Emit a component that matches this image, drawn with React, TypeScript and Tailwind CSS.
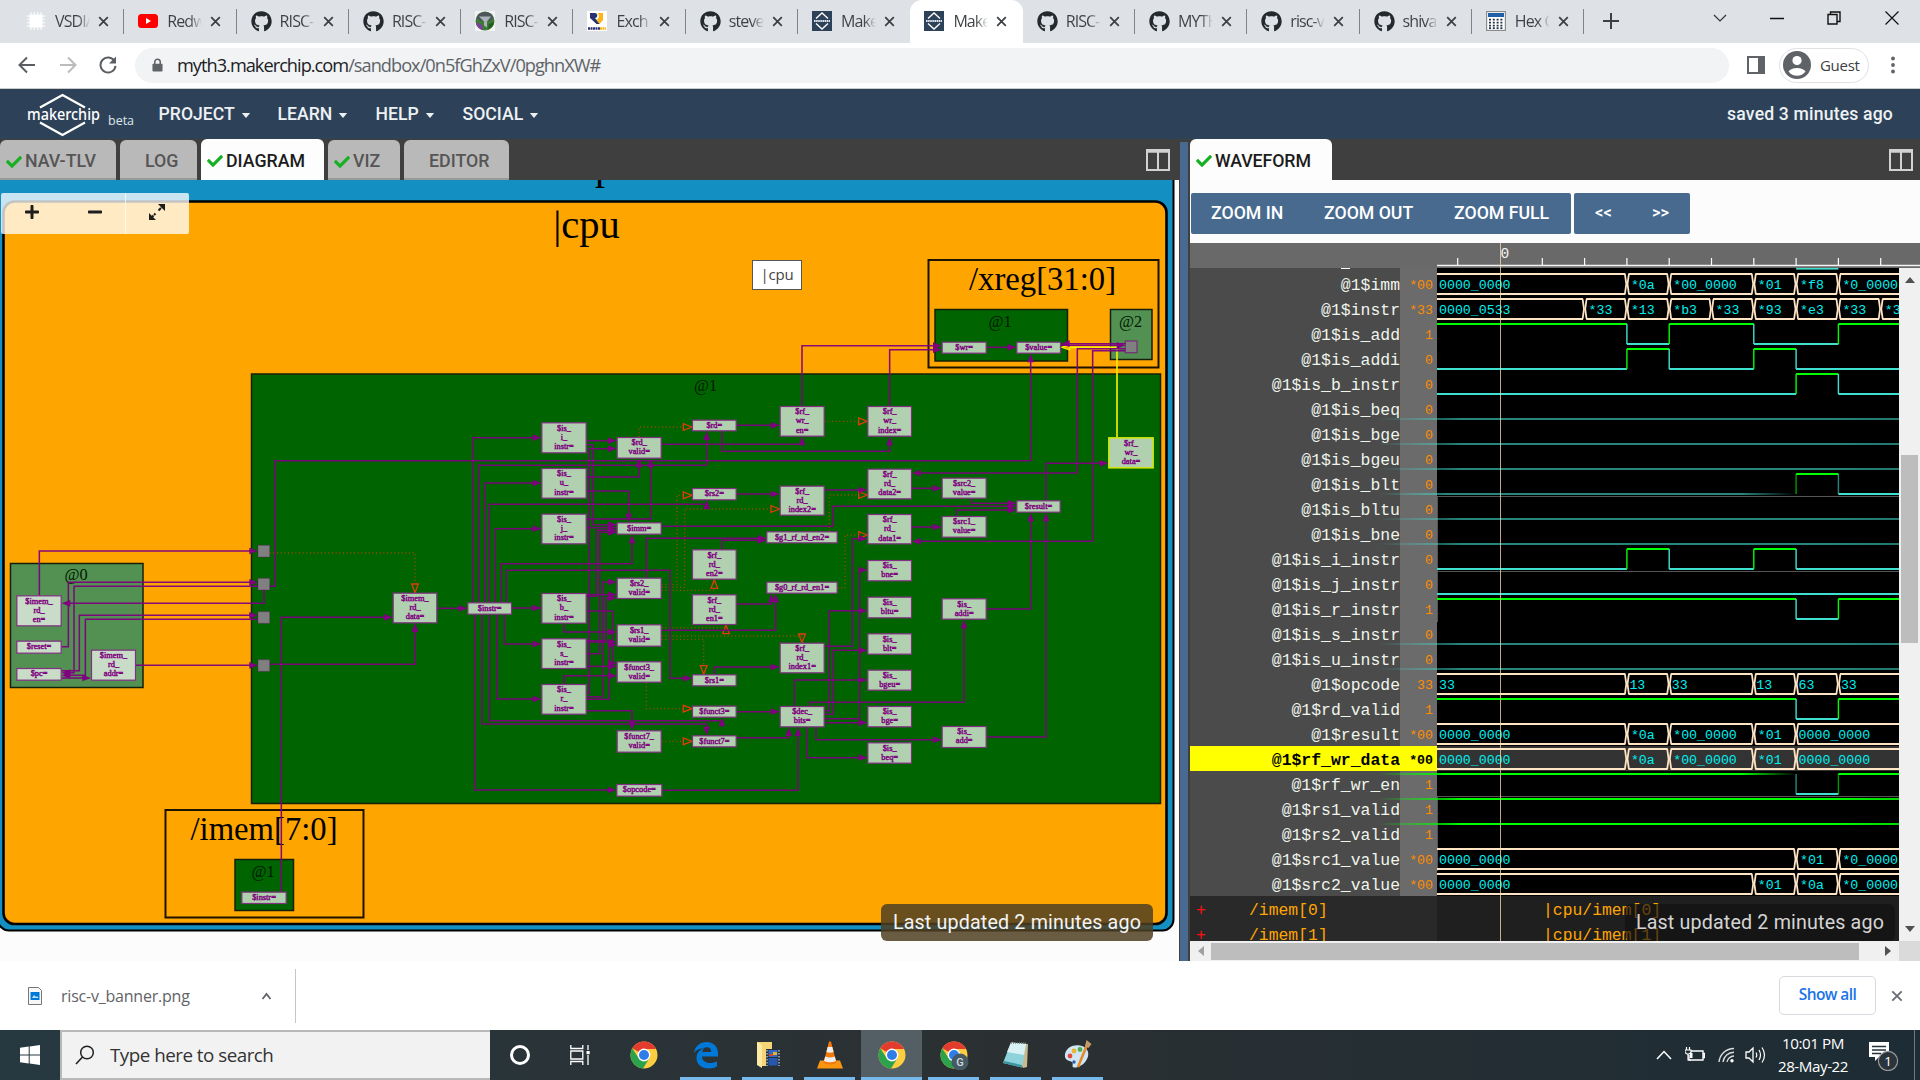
import React from "react";
import { FaGithub, FaCheck, FaPlus, FaMinus } from "react-icons/fa";

const ui = "font-['Open_Sans','Noto_Sans',sans-serif]";
const rob = "font-[Roboto,sans-serif]";

/* ---------- Browser chrome ---------- */

function Logo({ className = "" }: { className?: string }) {
  return (
    <svg viewBox="0 0 20 20" className={className}>
      <rect width="20" height="20" fill="#2d4259" />
      <path d="M4 7.5 10 2l6 5.5M4 12.5l6 5.5 6-5.5" fill="none" stroke="#fff" strokeWidth="1.3" />
      <path d="M2 10h16" stroke="#dde6ee" strokeWidth="2" strokeDasharray="1.6 .5" />
    </svg>
  );
}

function Favicon({ kind }: { kind: string }) {
  if (kind === "gh") return <FaGithub className="size-[21px] text-[#24292e]" />;
  if (kind === "mk") return <Logo className="size-5" />;
  if (kind === "yt")
    return (
      <svg viewBox="0 0 20 20" className="size-5">
        <rect y="3" width="20" height="14" rx="3.5" fill="#f00" />
        <path d="M8 7v6l5-3z" fill="#fff" />
      </svg>
    );
  if (kind === "chip")
    return (
      <svg viewBox="0 0 20 20" className="size-5">
        <path d="M5 1v18M8.3 1v18M11.7 1v18M15 1v18M1 5h18M1 8.3h18M1 11.7h18M1 15h18" stroke="#f6f7f8" strokeWidth="1.3" />
        <rect x="3.5" y="3.5" width="13" height="13" fill="#fff" />
      </svg>
    );
  if (kind === "globe")
    return (
      <svg viewBox="0 0 20 20" className="size-5">
        <rect width="20" height="20" fill="#f3f3f3" />
        <circle cx="10" cy="10" r="9.5" fill="#3d7a35" />
        <path d="M1.500 7a9 9 0 0 1 17 0l-4 3h-9z" fill="#4d565c" />
        <path d="M4 5.500h12l-4 5v6l-3-2v-4z" fill="#a9b4b8" />
        <path d="M1 11l6 3 1 5a9 9 0 0 1-7-8z" fill="#7c3f9a" />
        <path d="M19 11l-5 2-1 5a9 9 0 0 0 6-7z" fill="#205c1f" />
      </svg>
    );
  if (kind === "riscv")
    return (
      <svg viewBox="0 0 20 20" className="size-5">
        <rect width="20" height="20" fill="#fff" />
        <path d="M3 2h5c3 0 3 5 0 5l5 6H9.500L3 7z" fill="#283272" />
        <path d="M10.500 2H16v7l-3.500 4-3-4c3-2 3-5 1-7z" fill="#fdb515" />
        <path d="M1 17.500h12" stroke="#283272" strokeWidth="2.4" strokeDasharray="2 .5" />
        <path d="M13 17.500h6" stroke="#fdb515" strokeWidth="2.4" strokeDasharray="2 .5" />
      </svg>
    );
  return (
    <svg viewBox="0 0 20 20" className="size-5">
      <rect x=".6" y=".6" width="18.8" height="18.8" fill="#fff" stroke="#8a8a8a" strokeWidth="1.2" />
      <rect x="2" y="2" width="16" height="4" fill="#1f5fa8" />
      {[8, 11, 14, 16.6].map((y) => (
        <path key={y} d={`M3 ${y + 0.6}h14`} stroke="#26344a" strokeWidth="1.8" strokeDasharray="2 1.8" />
      ))}
    </svg>
  );
}

function Cross({ className = "" }: { className?: string }) {
  return (
    <svg viewBox="0 0 12 12" className={className}>
      <path d="M1.3 1.3l9.4 9.4M10.7 1.3l-9.4 9.4" stroke="currentColor" strokeWidth="1.9" />
    </svg>
  );
}

const tabs: [string, string][] = [
  ["chip", "VSDIA"], ["yt", "Redw"], ["gh", "RISC-"], ["gh", "RISC-"], ["globe", "RISC-"], ["riscv", "Exch"],
  ["gh", "steve"], ["mk", "Make"], ["mk", "Make"], ["gh", "RISC-"], ["gh", "MYTH"], ["gh", "risc-v"], ["gh", "shiva"], ["calc", "Hex C"],
];

function TabStrip() {
  return (
    <div className="flex h-[43px] bg-[#dee1e6] pl-[12px] text-[#3c4043]">
      {tabs.map(([kind, label], i) => {
        const active = i === 8;
        return (
          <div
            key={i}
            className={
              "flex w-[112.3px] shrink-0 items-center pl-[14px] pb-[1px] " +
              (active ? "rounded-t-xl bg-white" : "")
            }
          >
            <span className="flex w-[21px] shrink-0">
              <Favicon kind={kind} />
            </span>
            <span
              className={
                "ml-[8px] w-[35px] shrink-0 overflow-hidden whitespace-nowrap bg-gradient-to-r from-[#3c4043] from-65% to-transparent bg-clip-text text-[16px] leading-6 tracking-[-0.9px] text-transparent " +
                ui
              }
            >
              {label}
            </span>
            <Cross className="ml-[8px] size-[11px] shrink-0 text-[#3c4043]" />
            {!active && i !== 7 && <span className="ml-auto h-[25px] w-px bg-[#7f8489]" />}
          </div>
        );
      })}
      <svg viewBox="0 0 16 16" className="ml-[19px] mt-[13px] size-4">
        <path d="M8 0v16M0 8h16" stroke="#3c4043" strokeWidth="2" />
      </svg>
      <svg viewBox="0 0 14 8" className="ml-[94px] mt-[14px] h-2 w-[14px]">
        <path d="M1 1l6 6 6-6" fill="none" stroke="#333" strokeWidth="1.2" />
      </svg>
      <svg viewBox="0 0 14 14" className="ml-[43px] mt-[11px] size-[14px]">
        <path d="M0 7.5h14" stroke="#111" strokeWidth="1.5" />
      </svg>
      <svg viewBox="0 0 14 14" className="ml-[43px] mt-[11px] size-[14px]">
        <path d="M1 3.5h9V13H1zM3.5 3.5V1H13v9.5h-3" fill="none" stroke="#111" strokeWidth="1.4" />
      </svg>
      <svg viewBox="0 0 14 14" className="ml-[44px] mt-[11px] size-[14px]">
        <path d="M.5.5l13 13M13.500.5l-13 13" stroke="#111" strokeWidth="1.2" />
      </svg>
    </div>
  );
}

function AddressBar() {
  return (
    <div className="flex h-[46px] items-center border-b border-[#c9cbcd] bg-white pb-px">
      <svg viewBox="0 0 18 18" className="ml-[18px] size-[18px]">
        <path d="M17 9H2M9 1.500 1.500 9 9 16.500" fill="none" stroke="#5a5e62" strokeWidth="2" />
      </svg>
      <svg viewBox="0 0 18 18" className="ml-[23px] size-[18px]">
        <path d="M1 9h15M9 1.500 16.500 9 9 16.500" fill="none" stroke="#b9bbbd" strokeWidth="2" />
      </svg>
      <svg viewBox="0 0 18 18" className="ml-[22px] size-[18px]">
        <path d="M15.500 5.200A7.500 7.500 0 1 0 16.500 9.800" fill="none" stroke="#5a5e62" strokeWidth="2" />
        <path d="M17 .5v7h-7z" fill="#5a5e62" />
      </svg>
      <div className="ml-[18px] flex h-[35px] w-[1594px] items-center rounded-full bg-[#f1f3f4] pl-[17px]">
        <svg viewBox="0 0 12 14" className="h-[14px] w-[11px]">
          <path d="M3 6V3.800a3 3 0 0 1 6 0V6" fill="none" stroke="#5f6368" strokeWidth="1.700" />
          <rect x=".5" y="5.500" width="11" height="8.500" rx="1" fill="#5f6368" />
        </svg>
        <span className={"ml-[14px] mt-[2px] whitespace-nowrap text-[18.2px] tracking-[-0.98px] text-[#5f6368] " + ui}>
          <span className="text-[#202124]">myth3.makerchip.com</span>/sandbox/0n5fGhZxV/0pghnXW#
        </span>
      </div>
      <svg viewBox="0 0 18 18" className="ml-[18px] size-[18px]">
        <path d="M1 1h16v16H1z" fill="none" stroke="#5f6368" strokeWidth="2" />
        <path d="M11 1h6v16h-6z" fill="#5f6368" />
      </svg>
      <div className="ml-[14px] flex h-[35px] w-[90px] items-center rounded-full border border-[#dfe1e4] pl-[3px]">
        <svg viewBox="0 0 28 28" className="size-7">
          <circle cx="14" cy="14" r="14" fill="#5f6368" />
          <circle cx="14" cy="9.500" r="4.600" fill="#fff" />
          <path d="M5.500 20.500a9.300 6 0 0 1 17 0 10.500 10.500 0 0 1-17 0z" fill="#fff" />
        </svg>
        <span className={"ml-[9px] text-[15px] tracking-[-0.3px] text-[#3c4043] " + ui}>Guest</span>
      </div>
      <svg viewBox="0 0 4 18" className="ml-[22px] h-[18px] w-1">
        <circle cx="2" cy="2.500" r="1.900" fill="#5f6368" />
        <circle cx="2" cy="9" r="1.900" fill="#5f6368" />
        <circle cx="2" cy="15.500" r="1.900" fill="#5f6368" />
      </svg>
    </div>
  );
}

/* ---------- Makerchip header ---------- */

function MenuItem({ label, className }: { label: string; className: string }) {
  return (
    <span className={"flex items-center " + className}>
      {label}
      <svg viewBox="0 0 10 6" className="ml-[6px] mt-[2px] h-[5px] w-[10px]">
        <path d="M0 0h10L5 6z" fill="#eef1f4" />
      </svg>
    </span>
  );
}

function Header() {
  return (
    <div className={"flex h-[50px] items-center bg-[#2d4259] pt-px text-[17.6px] font-medium text-[#eef1f4] " + rob}>
      <svg viewBox="0 0 78 44" className="ml-[25px] h-[44px] w-[78px]">
        <path d="M15 14.500 37.500 2 60 14.500M15 29.500 37.500 42 60 29.500" fill="none" stroke="#fff" strokeWidth="2.200" />
        <text x="38.5" y="27" textAnchor="middle" textLength="73" lengthAdjust="spacingAndGlyphs" fill="#fff" className="font-['Noto_Sans',sans-serif] text-[17px] font-medium">
          makerchip
        </text>
      </svg>
      <span className={"ml-[5px] mt-[14px] text-[12.5px] font-normal text-[#dfe5ea] " + ui}>beta</span>
      <MenuItem label="PROJECT" className="ml-[24.5px] w-[119px]" />
      <MenuItem label="LEARN" className="w-[98px]" />
      <MenuItem label="HELP" className="w-[87px]" />
      <MenuItem label="SOCIAL" className="w-[100px]" />
      <span className="ml-auto mr-[27px] tracking-[0.17px]">saved 3 minutes ago</span>
    </div>
  );
}

function PaneIcon({ className }: { className: string }) {
  return (
    <svg viewBox="0 0 24 22" className={"h-[22px] w-6 " + className}>
      <path d="M1 1h22v20H1zM12 2v19" fill="none" stroke="#d2d2d2" strokeWidth="2" />
      <path d="M1 2h22" stroke="#d2d2d2" strokeWidth="3.500" />
    </svg>
  );
}

function PaneTab({ label, check, active, className }: { label: string; check?: boolean; active?: boolean; className: string }) {
  return (
    <div
      className={
        "flex items-center rounded-t-md text-[17.8px] font-medium " +
        rob + " " +
        (active ? "h-[41px] bg-[#fdfdfd] pt-[3px] text-[#1c1c1c] " : "h-10 border-b-2 border-[#999] bg-[#b9b9b9] pt-[5px] text-[#555] ") +
        className
      }
    >
      {check && <FaCheck className="mr-[3px] size-[16px] shrink-0 text-[#16b022]" />}
      {label}
    </div>
  );
}

/* ---------- Pipeline diagram ---------- */

type NodeDef = [number, number, number, number, string, string?];

const nodes: NodeDef[] = [
  [124, 187, 260, 280, "$is_|i_|instr="], [124, 324, 260, 416, "$is_|u_|instr="], [124, 461, 260, 553, "$is_|j_|instr="],
  [124, 699, 260, 791, "$is_|b_|instr="], [124, 835, 260, 927, "$is_|s_|instr="], [124, 972, 260, 1064, "$is_|r_|instr="],
  [350, 231, 485, 296, "$rd_|valid="], [350, 487, 485, 524, "$imm="], [350, 653, 485, 717, "$rs2_|valid="],
  [350, 793, 485, 860, "$rs1_|valid="], [350, 904, 485, 968, "$funct3_|valid="], [350, 1111, 485, 1178, "$funct7_|valid="],
  [349, 1272, 487, 1310, "$opcode="], [576, 179, 710, 214, "$rd="], [576, 384, 710, 421, "$rs2="],
  [576, 568, 710, 659, "$rf_|rd_|en2="], [576, 703, 710, 795, "$rf_|rd_|en1="], [576, 943, 710, 979, "$rs1="],
  [576, 1037, 710, 1073, "$funct3="], [576, 1126, 710, 1162, "$funct7="], [839, 138, 974, 230, "$rf_|wr_|en="],
  [839, 377, 974, 467, "$rf_|rd_|index2="], [799, 514, 1013, 550, "$g1_rf_rd_en2="], [799, 665, 1013, 701, "$g0_rf_rd_en1="],
  [839, 848, 974, 940, "$rf_|rd_|index1="], [839, 1038, 974, 1102, "$dec_|bits="], [1102, 138, 1236, 230, "$rf_|wr_|index="],
  [1102, 326, 1236, 418, "$rf_|rd_|data2="], [1102, 462, 1236, 553, "$rf_|rd_|data1="], [1102, 600, 1236, 664, "$is_|bne="],
  [1102, 710, 1236, 775, "$is_|bltu="], [1102, 820, 1236, 884, "$is_|blt="], [1102, 929, 1236, 992, "$is_|bgeu="],
  [1102, 1038, 1236, 1102, "$is_|bge="], [1102, 1147, 1236, 1211, "$is_|beq="], [1325, 353, 1460, 416, "$src2_|value="],
  [1325, 468, 1460, 533, "$src1_|value="], [1325, 715, 1460, 779, "$is_|addi="], [1325, 1098, 1460, 1164, "$is_|add="],
  [1549, 421, 1682, 458, "$result="], [1825, 232, 1961, 325, "$rf_|wr_|data=", "y"], [1325, -55, 1460, -19, "$wr="],
  [1549, -55, 1683, -19, "$value="], [-1451, 706, -1315, 799, "$imem_|rd_|en=", "l"], [-1451, 842, -1315, 881, "$reset=", "l"],
  [-1451, 924, -1315, 962, "$pc=", "l"], [-1227, 869, -1092, 962, "$imem_|rd_|addr=", "l"],
  [-322, 698, -188, 790, "$imem_|rd_|data="], [-98, 727, 36, 764, "$instr="], [-776, 1595, -640, 1632, "$instr="],
];

const ports: [number, number][] = [[-726, 556], [-726, 655], [-726, 755], [-726, 899], [1876, -57]];

const wires: number[][] = [
  [-82, 727, -82, 233, 124, 233], [-64, 727, -64, 316, 620, 316, 620, 214], [-46, 727, -46, 369, 124, 369],
  [-32, 727, -32, 433, 620, 433, 620, 421], [-14, 727, -14, 506, 124, 506], [3, 727, 3, 611, 396, 611, 396, 524],
  [19, 727, 19, 631, 510, 631, 510, 955, 576, 955], [36, 744, 124, 744], [13, 764, 13, 852, 124, 852],
  [-76, 764, -76, 1290, 349, 1290], [-54, 764, -54, 1092, 620, 1092, 620, 1126], [-31, 764, -31, 1082, 666, 1082, 666, 1073],
  [-9, 764, -9, 1017, 124, 1017], [-188, 745, -98, 745], [260, 242, 350, 242], [260, 254, 279, 254, 279, 494, 350, 494],
  [260, 1000, 268, 1000, 268, 266, 350, 266], [260, 351, 417, 351, 417, 296], [260, 393, 386, 393, 386, 487],
  [260, 477, 452, 477, 452, 296], [260, 503, 350, 503], [260, 709, 289, 709, 289, 511, 350, 511],
  [260, 881, 299, 881, 299, 517, 350, 517], [260, 704, 350, 704], [260, 842, 318, 842, 318, 714, 350, 714],
  [260, 1010, 308, 1010, 308, 666, 350, 666], [192, 791, 192, 816, 350, 816], [260, 846, 350, 846],
  [260, 1018, 328, 1018, 328, 854, 350, 854], [260, 753, 338, 753, 338, 910, 350, 910], [260, 919, 350, 919],
  [192, 972, 192, 947, 350, 947], [260, 1052, 396, 1052, 396, 1111], [485, 253, 906, 253, 906, 230], [710, 196, 839, 196],
  [666, 214, 666, 274, 1169, 274, 1169, 230], [-691, 679, -675, 679, -675, 302, 1592, 302, 1592, -19], [710, 402, 839, 402],
  [485, 499, 999, 499, 999, 439, 1549, 439], [439, 653, 439, 535, 799, 535], [666, 568, 666, 541, 799, 541],
  [710, 732, 814, 732, 814, 701], [485, 811, 827, 811, 827, 701], [643, 943, 643, 921, 839, 921], [710, 1055, 839, 1055],
  [710, 1133, 866, 1133, 866, 1102], [487, 1291, 894, 1291, 894, 1102], [974, 390, 1102, 390],
  [974, 859, 1057, 859, 1057, 536, 1102, 536], [883, 1038, 883, 960, 1102, 960], [929, 1038, 929, 1027, 1392, 1027, 1392, 779],
  [974, 1052, 988, 1052, 988, 752, 1102, 752], [974, 1063, 1000, 1063, 1000, 871, 1102, 871],
  [974, 1076, 1079, 1076, 1079, 630, 1102, 630], [974, 1088, 1102, 1088], [920, 1102, 920, 1193, 1102, 1193],
  [948, 1102, 948, 1139, 1325, 1139], [1236, 385, 1325, 385], [1236, 501, 1325, 501], [1415, 416, 1415, 430, 1549, 430],
  [1369, 468, 1369, 450, 1549, 450], [1460, 747, 1592, 747, 1592, 458], [1460, 1131, 1638, 1131, 1638, 458],
  [1638, 421, 1638, 310, 1825, 310], [1876, -34, 1732, -34, 1732, 339, 1236, 339], [1876, -28, 1778, -28, 1778, 544, 1236, 544],
  [906, 138, 906, -43, 1325, -43], [1169, 138, 1169, -31, 1325, -31], [1460, -38, 1549, -38], [1876, -49, 1683, -49],
  [1683, -44, 1876, -44], [-1382, 706, -1382, 573, -726, 573], [-1315, 860, -1295, 860, -1295, 667, -726, 667],
  [-726, 679, -1278, 679, -1278, 938, -1315, 938], [-708, 689, -708, 730, -1315, 730],
  [-1315, 932, -1262, 932, -1262, 766, -726, 766], [-726, 778, -1244, 778, -1244, 946, -1315, 946],
  [-1315, 954, -1227, 954], [-1092, 916, -726, 916], [-691, 913, -255, 913, -255, 790], [-656, 1595, -656, 772, -322, 772],
];

const dotted: number[][] = [
  [417, 231, 417, 201, 576, 201], [974, 184, 1102, 184], [485, 674, 531, 674, 531, 406, 576, 406],
  [485, 682, 554, 682, 554, 447, 839, 447], [485, 691, 643, 691, 643, 659], [485, 803, 678, 803, 678, 795],
  [485, 828, 906, 828, 906, 848], [485, 838, 611, 838, 611, 943], [439, 968, 439, 1046, 576, 1046],
  [485, 1144, 576, 1144], [988, 514, 988, 405, 1102, 405], [1013, 684, 1035, 684, 1035, 525, 1102, 525],
  [-691, 579, -255, 579, -255, 698],
];

function arrowHead(p: number[]) {
  const n = p.length;
  const x = p[n - 2], y = p[n - 1];
  const dx = Math.sign(x - p[n - 4]), dy = Math.sign(y - p[n - 3]);
  const bx = x - dx * 26, by = y - dy * 26;
  return `M${x} ${y}L${bx - dy * 10} ${by - dx * 10}L${bx + dy * 10} ${by + dx * 10}Z`;
}

function linePath(p: number[], trim = 0) {
  let d = "";
  const n = p.length;
  const dx = Math.sign(p[n - 2] - p[n - 4]), dy = Math.sign(p[n - 1] - p[n - 3]);
  for (let i = 0; i < n; i += 2) {
    const last = i === n - 2;
    d += `${i ? "L" : "M"}${p[i] - (last ? dx * trim : 0)} ${p[i + 1] - (last ? dy * trim : 0)}`;
  }
  return d;
}

function Stage({ x, y, w, h, fill, label, lx, ly }: { x: number; y: number; w: number; h: number; fill: string; label: string; lx: number; ly: number }) {
  return (
    <g>
      <rect x={x} y={y} width={w} height={h} fill={fill} stroke="#14200a" strokeWidth="1.500" />
      <text x={lx} y={ly} textAnchor="middle" fill="#001a00" className="text-[16.3px]">{label}</text>
    </g>
  );
}

function Diagram() {
  return (
    <svg viewBox="0 180 1179 781" className="block h-[781px] w-[1179px] font-['Liberation_Serif',serif]">
      <rect x="0" y="180" width="1179" height="781" fill="#fcfcfc" />
      <rect x="-2" y="150" width="1175.500" height="780.500" rx="11" fill="#138fc2" stroke="#000" strokeWidth="2" />
      <text x="595" y="179" className="text-[40px]">p</text>
      <rect x="3.500" y="201.500" width="1163" height="722.500" rx="11" fill="#ffa500" stroke="#000" strokeWidth="2.600" />
      <text x="586.500" y="237.500" textAnchor="middle" className="text-[40.6px]">|cpu</text>
      <rect x="928.500" y="260" width="230" height="107.500" fill="none" stroke="#1c1200" strokeWidth="2" />
      <rect x="165.500" y="810" width="198" height="107.500" fill="none" stroke="#1c1200" strokeWidth="2" />
      <text x="1042.500" y="290" textAnchor="middle" className="text-[32.7px]">/xreg[31:0]</text>
      <text x="264" y="840" textAnchor="middle" className="text-[32.7px]">/imem[7:0]</text>
      <Stage x={251.5} y={374} w={909} h={429.500} fill="#006400" label="@1" lx={705.5} ly={391} />
      <Stage x={935} y={309.5} w={132.500} h={51.500} fill="#006400" label="@1" lx={1000} ly={327} />
      <Stage x={1110.5} y={309.5} w={41.500} h={50} fill="#529152" label="@2" lx={1130.5} ly={327} />
      <Stage x={10.500} y={563.5} w={132.500} h={124} fill="#529152" label="@0" lx={76} ly={580} />
      <Stage x={235} y={859.5} w={58.500} h={51} fill="#006400" label="@1" lx={263} ly={877} />
      <g transform="translate(500 360) scale(.33333)">
        {ports.map(([x, y], i) => (
          <rect key={i} x={x} y={y} width="35" height="35" fill="#808080" stroke="#800080" strokeOpacity={i === 4 ? 0.6 : 0.25} strokeWidth="4" />
        ))}
        {dotted.map((p, i) => (
          <g key={i} fill="none" stroke="#e03c0a">
            <path d={linePath(p, 26)} strokeWidth="4" strokeDasharray="3 8" strokeOpacity=".75" />
            <path d={arrowHead(p)} strokeWidth="4" />
          </g>
        ))}
        <g stroke="#f4ee00" fill="none" strokeWidth="5">
          <path d="M1851 232V-38H1709" />
          <path d="M1709 -46L1685 -38L1709 -30Z" fill="#ffa500" strokeWidth="3.500" />
        </g>
        {wires.map((p, i) => (
          <g key={i}>
            <path d={linePath(p, 10)} fill="none" stroke="#800080" strokeOpacity=".95" strokeWidth="4.600" />
            <path d={arrowHead(p)} fill="#800080" />
          </g>
        ))}
        {nodes.map(([x1, y1, x2, y2, label, kind], i) => {
          const lines = label.split("|");
          const mid = (x1 + x2) / 2;
          return (
            <g key={i}>
              <rect
                x={x1 + 1.5} y={y1 + 1.5} width={x2 - x1 - 3} height={y2 - y1 - 3}
                fill={kind === "l" ? "#c8dcc8" : "#b0d0b0"}
                stroke={kind === "y" ? "#d4e800" : "#823082"}
                strokeWidth={kind === "y" ? 4.5 : 3.6}
              />
              {lines.map((t, k) => (
                <text key={k} x={mid} y={y1 + 25 + k * 27.5} textAnchor="middle" fill="#800080" stroke="#800080" strokeWidth="1.300" className="text-[25px]">
                  {t}
                </text>
              ))}
            </g>
          );
        })}
      </g>
    </svg>
  );
}

function LastUpdated({ className }: { className: string }) {
  return (
    <div className={"absolute flex h-[37px] items-center justify-center rounded-md text-[19.7px] tracking-[0.16px] whitespace-nowrap " + rob + " " + className}>
      Last updated 2 minutes ago
    </div>
  );
}

function DiagramPane() {
  return (
    <div className="flex w-[1179px] flex-col">
      <div className="flex h-[41px] items-end bg-[#3f3f3f]">
        <PaneTab label="NAV-TLV" check className="w-[116px] pl-[6px]" />
        <PaneTab label="LOG" className="ml-1 w-[77px] pl-[25px]" />
        <PaneTab label="DIAGRAM" check active className="ml-1 w-[123px] pl-[6px]" />
        <PaneTab label="VIZ" check className="ml-1 w-[72px] pl-[6px]" />
        <PaneTab label="EDITOR" className="ml-1 w-[105px] pl-[25px]" />
        <PaneIcon className="mb-[9px] ml-auto mr-[9px]" />
      </div>
      <div className="relative h-[781px]">
        <Diagram />
        <div className="absolute left-[1px] top-[13px] flex h-[41px] w-[188px] items-center rounded-xs bg-white/[0.77] pb-[3px] text-[#1d1d1d]">
          <FaPlus className="ml-[23px] size-[16px]" />
          <FaMinus className="ml-[47px] size-[16px]" />
          <span className="-mb-[3px] ml-[22px] h-[41px] w-px bg-white/70" />
          <svg viewBox="0 0 16 16" className="ml-[23px] size-4">
            <path d="M9.500 6.500 14 2M2 14l4.500-4.500" stroke="#1d1d1d" strokeWidth="2" strokeDasharray="3.500 .8" />
            <path d="M9 0h7v7zM0 9v7h7z" fill="#1d1d1d" />
          </svg>
        </div>
        <div className="absolute left-[752px] top-[80px] flex h-[30px] w-[50px] items-center justify-center border border-[#555] bg-white pb-[2px] font-['Open_Sans',sans-serif] text-[15px] tracking-[-0.2px] text-[#444]">
          |cpu
        </div>
        <LastUpdated className="left-[881px] top-[724px] w-[272px] bg-[#4f4022]/85 text-[#f4f4f4]" />
      </div>
    </div>
  );
}

/* ---------- Waveform viewer ---------- */

const END = 521;
const X0 = 59;
const slot = (k: number) => 122 + 42.3 * k;

type Row = { name: string; val: string; bus?: [number, string][]; bits?: number[]; hi?: boolean; fade?: boolean };

const imm: [number, string][] = [[-9, "0000_0000"], [3, "*0a"], [4, "*00_0000"], [6, "*01"], [7, "*f8"], [8, "*0_0000"]];
const res: [number, string][] = [[-9, "0000_0000"], [3, "*0a"], [4, "*00_0000"], [6, "*01"], [7, "0000_0000"]];

const rows: Row[] = [
  { name: "@1$imm", val: "*00", bus: imm },
  { name: "@1$instr", val: "*33", bus: [[-9, "0000_0533"], [2, "*33"], [3, "*13"], [4, "*b3"], [5, "*33"], [6, "*93"], [7, "*e3"], [8, "*33"], [9, "*3"]] },
  { name: "@1$is_add", val: "1", hi: true, bits: [3, 4, 6, 8] },
  { name: "@1$is_addi", val: "0", bits: [3, 4, 6, 7] },
  { name: "@1$is_b_instr", val: "0", bits: [7, 8] },
  { name: "@1$is_beq", val: "0", bits: [], fade: true },
  { name: "@1$is_bge", val: "0", bits: [], fade: true },
  { name: "@1$is_bgeu", val: "0", bits: [], fade: true },
  { name: "@1$is_blt", val: "0", bits: [7, 8], fade: true },
  { name: "@1$is_bltu", val: "0", bits: [], fade: true },
  { name: "@1$is_bne", val: "0", bits: [], fade: true },
  { name: "@1$is_i_instr", val: "0", bits: [3, 4, 6, 7] },
  { name: "@1$is_j_instr", val: "0", bits: [] },
  { name: "@1$is_r_instr", val: "1", hi: true, bits: [7, 8] },
  { name: "@1$is_s_instr", val: "0", bits: [], fade: true },
  { name: "@1$is_u_instr", val: "0", bits: [], fade: true },
  { name: "@1$opcode", val: "33", bus: [[-9, "33"], [3, "13"], [4, "33"], [6, "13"], [7, "63"], [8, "33"]] },
  { name: "@1$rd_valid", val: "1", hi: true, bits: [7, 8] },
  { name: "@1$result", val: "*00", bus: res },
  { name: "@1$rf_wr_data", val: "*00", bus: res },
  { name: "@1$rf_wr_en", val: "1", hi: true, bits: [7, 8], fade: true },
  { name: "@1$rs1_valid", val: "1", hi: true, bits: [], fade: true },
  { name: "@1$rs2_valid", val: "1", hi: true, bits: [], fade: true },
  { name: "@1$src1_value", val: "*00", bus: [[-9, "0000_0000"], [7, "*01"], [8, "*0_0000"]] },
  { name: "@1$src2_value", val: "*00", bus: [[-9, "0000_0000"], [6, "*01"], [7, "*0a"], [8, "*0_0000"]] },
];

function BusRow({ segs, top }: { segs: [number, string][]; top: number }) {
  return (
    <g>
      {segs.map(([k, text], i) => {
        const first = i === 0;
        const a = first ? X0 : slot(k);
        const b = i + 1 < segs.length ? slot(segs[i + 1][0]) : END + 10;
        const m = top + 10;
        const left = first ? "" : `M${a + 2} ${top}L${a + 0.6} ${m}L${a + 2} ${top + 20}`;
        const right = `M${b - 2} ${top}L${b - 0.6} ${m}L${b - 2} ${top + 20}`;
        return (
          <g key={i}>
            <path d={`M${first ? a : a + 1.5} ${top}H${b - 1.5}M${first ? a : a + 1.5} ${top + 20}H${b - 1.5}${left}${right}`} fill="none" stroke="#ffe4c4" strokeWidth="1.800" />
            <text x={first ? a + 2 : a + (text[0] === "*" ? 4 : 2.5)} y={top + 15} fill="#00f0f0" className="text-[13.25px]">{text}</text>
          </g>
        );
      })}
    </g>
  );
}

function BitRow({ row, top }: { row: Row; top: number }) {
  const out: React.ReactNode[] = [];
  let hi = !!row.hi;
  let x = row.fade ? 0 : X0;
  const pts = [...(row.bits || []).map(slot), END];
  pts.forEach((p, i) => {
    const y = hi ? top : top + 20;
    const soft = row.fade && i === 0;
    const broken = soft && pts.length > 1;
    out.push(
      <rect
        key={"h" + i} x={x} y={y - (soft && !hi ? 0.7 : 1)} width={p - x} height={soft && !hi ? 1.4 : 2}
        fill={soft ? (hi ? (broken ? "url(#fadeHiEnd)" : "url(#fadeHi)") : broken ? "url(#fadeLoEnd)" : "url(#fadeLo)") : hi ? "#00ff00" : "#40e0d0"}
      />,
    );
    if (i < pts.length - 1) {
      out.push(<rect key={"v" + i} x={p - 0.7} y={top} width="1.400" height="20" fill={hi ? "#40e0d0" : "#00ff00"} opacity={row.fade ? 0.6 : 1} />);
      hi = !hi;
      x = p;
    }
  });
  return <g>{out}</g>;
}

const fades: [string, string, number, number][] = [
  ["fadeHi", "#00ff00", 1, 0.85],
  ["fadeLo", "#40e0d0", 0.85, 0.75],
  ["fadeHiEnd", "#00ff00", 1, 0],
  ["fadeLoEnd", "#40e0d0", 0.85, 0],
];

function Waves() {
  return (
    <svg viewBox="0 0 521 673" className="absolute left-[188px] top-0 h-[673px] w-[521px] font-['Liberation_Mono',monospace]">
      <defs>
        {fades.map(([id, color, full, end]) => (
          <linearGradient key={id} id={id}>
            <stop offset="0" stopColor={color} stopOpacity="0" />
            <stop offset=".16" stopColor={color} stopOpacity={full} />
            <stop offset=".87" stopColor={color} stopOpacity={full} />
            <stop offset="1" stopColor={color} stopOpacity={end} />
          </linearGradient>
        ))}
      </defs>
      <rect x={slot(7)} y="0" width="42.300" height="1.600" fill="#40e0d0" />
      <path d="M59 228.500H521M59 303.500H521M59 528.500H521M59.500 228V354M59.500 528V603" fill="none" stroke="#555" strokeWidth="1" />
      {rows.map((r, i) =>
        r.bus ? <BusRow key={i} segs={r.bus} top={6 + 25 * i} /> : <BitRow key={i} row={r} top={6 + 25 * i} />,
      )}
    </svg>
  );
}

function Ruler() {
  return (
    <div className="h-[25px] bg-[#696969]">
      <svg viewBox="0 0 730 25" className="block h-[25px] w-[730px]">
        <path d="M247 22.500H730" stroke="#f4f4f4" strokeWidth="1.300" />
        {[-1, 1, 2, 3, 4, 5, 6, 7, 8, 9].map((k) => (
          <path key={k} d={`M${310 + 42.3 * k} 15V22`} stroke="#fff" strokeWidth="1.200" />
        ))}
        <text x="310.500" y="15" fill="#f4f4f4" className="font-['Liberation_Mono',monospace] text-[14.500px]">0</text>
      </svg>
    </div>
  );
}

function GroupRow({ n }: { n: number }) {
  return (
    <div className="flex h-[25px] text-[16.4px] leading-[29px] text-[#ffa500]">
      <div className="flex w-[247px] bg-[#292929]">
        <span className="w-[59px] pl-[6px] text-[#ff1010]">+</span>
        <span>/imem[{n}]</span>
      </div>
      <div className="flex-1 bg-[#1f1f1f] pl-[106px]">|cpu/imem[{n}]</div>
    </div>
  );
}

function BlueButton({ children, className }: { children: React.ReactNode; className: string }) {
  return <button className={"text-left " + className}>{children}</button>;
}

function WavePane() {
  return (
    <div className="flex w-[730px] flex-col bg-[#fcfcfc]">
      <div className="flex h-[41px] items-end bg-[#3f3f3f]">
        <PaneTab label="WAVEFORM" check active className="w-[142px] pl-[6px] tracking-[-0.1px]" />
        <PaneIcon className="mb-[9px] ml-auto mr-[7px]" />
      </div>
      <div className={"flex h-[63px] pl-px pt-[13px] text-[17.7px] font-medium text-white " + rob}>
        <div className="flex h-[41px] w-[380px] rounded-xs bg-[#486a8f]">
          <BlueButton className="w-[113px] pl-[20px]">ZOOM IN</BlueButton>
          <BlueButton className="w-[130px] pl-[20px]">ZOOM OUT</BlueButton>
          <BlueButton className="pl-[20px]">ZOOM FULL</BlueButton>
        </div>
        <div className="ml-[3px] flex h-[41px] w-[116px] rounded-xs bg-[#486a8f]">
          <BlueButton className="w-[58px] pl-[21px] text-[16.5px]">&lt;&lt;</BlueButton>
          <BlueButton className="pl-[20px] text-[16.5px]">&gt;&gt;</BlueButton>
        </div>
      </div>
      <div className="relative">
        <Ruler />
        <div className="flex">
          <div className="relative h-[673px] w-[709px] overflow-hidden font-['Liberation_Mono',monospace]">
            <div className="flex h-[3px]">
              <div className="w-[210px] bg-[#4b4b4b]">
                <div className="ml-[151px] h-px w-[9px] bg-white" />
              </div>
              <div className="w-[37px] bg-[#6b6b6b]" />
              <div className="flex-1 bg-black" />
            </div>
            {rows.map((r, i) => {
              const sel = i === 19;
              return (
                <div key={r.name} className="flex h-[25px] text-[#f0f5ec]">
                  <div className={"w-[210px] text-right text-[16.45px] leading-[29px] " + (sel ? "bg-[#ffff00] font-bold text-black" : "bg-[#4b4b4b]")}>{r.name}</div>
                  <div className={"w-[37px] pr-[4px] text-right text-[13.25px] leading-[29px] " + (sel ? "bg-[#ffff00] font-bold text-black" : "bg-[#6b6b6b] text-[#ff8c00]")}>{r.val}</div>
                  <div className={"flex-1 " + (sel ? "bg-[#333]" : "bg-black")} />
                </div>
              );
            })}
            <GroupRow n={0} />
            <GroupRow n={1} />
            <Waves />
          </div>
          <div className="flex w-[21px] flex-col items-center bg-[#f0f0f0]">
            <svg viewBox="0 0 10 6" className="mt-[9px] h-[6px] w-[10px]"><path d="M0 6h10L5 0z" fill="#505050" /></svg>
            <div className="mt-[172px] h-[188px] w-[17px] bg-[#bdbdbd]" />
            <svg viewBox="0 0 10 6" className="mt-[283px] h-[6px] w-[10px]"><path d="M0 0h10L5 6z" fill="#505050" /></svg>
          </div>
        </div>
        <div className="absolute left-[309.5px] top-0 h-[698px] w-[1.5px] bg-[#ffe0a8]/75" />
        <LastUpdated className="left-[435px] top-[661px] w-[270px] bg-[#111]/65 text-[#d4d4d4]" />
      </div>
      <div className="flex h-5 items-center bg-[#f0f0f0]">
        <svg viewBox="0 0 6 10" className="ml-2 h-[10px] w-[6px]"><path d="M6 0v10L0 5z" fill="#a0a0a0" /></svg>
        <div className="ml-[7px] h-[17px] w-[648px] bg-[#bdbdbd]" />
        <svg viewBox="0 0 6 10" className="ml-[26px] h-[10px] w-[6px]"><path d="M0 0v10L6 5z" fill="#505050" /></svg>
        <div className="ml-auto h-5 w-[21px] bg-[#dadada]" />
      </div>
    </div>
  );
}

/* ---------- Download shelf and taskbar ---------- */

function DownloadBar() {
  return (
    <div className={"flex h-[69px] items-center bg-white " + ui}>
      <svg viewBox="0 0 14 18" className="ml-[28px] h-[18px] w-[14px]">
        <path d="M.5.5h10l3 3v14H.5z" fill="#f7f7f7" stroke="#777" />
        <rect x="2.500" y="5" width="9" height="8" fill="#0078d7" />
        <path d="M4 11l2-3 2 2 1-1 1.500 2z" fill="#bfe0ff" />
      </svg>
      <span className="ml-[19px] w-[129px] whitespace-nowrap text-[16px] tracking-[-0.22px] text-[#5f6368]">risc-v_banner.png</span>
      <svg viewBox="0 0 10 8" className="ml-[71px] h-2 w-[11px]"><path d="M1 7l4-5 4 5" fill="none" stroke="#5f6368" strokeWidth="1.800" /></svg>
      <span className="ml-[23px] h-[54px] w-px bg-[#c4c6c9]" />
      <button className="mb-px ml-auto h-[39px] w-[97px] rounded-[5px] border border-[#d6d9dd] pb-px text-[15.5px] font-semibold tracking-[-0.6px] text-[#1a73e8]">Show all</button>
      <Cross className="ml-[15px] mr-[17px] size-3 text-[#6b6f73]" />
    </div>
  );
}

function Chrome({ badge }: { badge?: boolean }) {
  return (
    <svg viewBox="0 0 30 30" className="size-[30px]">
      <circle cx="15" cy="15" r="13.500" fill="#ffcd40" />
      <path d="M15 15 3.300 8.200A13.500 13.500 0 0 1 26.700 8.200L27 9H15z" fill="#e33b2e" />
      <path d="M3.300 8.200A13.500 13.500 0 0 0 14 28.500L20.500 18 9.500 18z" fill="#2ba24c" />
      <circle cx="15" cy="15" r="6.400" fill="#fff" />
      <circle cx="15" cy="15" r="5" fill="#2f7de9" />
      {badge && (
        <g>
          <circle cx="21" cy="22" r="8.500" fill="#455a64" />
          <text x="21" y="26" textAnchor="middle" fill="#d5dde1" className="font-[Roboto,sans-serif] text-[11px] font-medium">G</text>
        </g>
      )}
    </svg>
  );
}

function TaskItem({ children, line = true, active, className = "" }: { children: React.ReactNode; line?: boolean; active?: boolean; className?: string }) {
  return (
    <div className={"flex h-[50px] flex-col items-center " + (active ? "w-[61px] bg-[#545f65] " : "w-[51px] ") + className}>
      <div className="flex h-[47px] items-center pt-[3px]">{children}</div>
      {line && <div className="h-[3px] w-full bg-[#76b9ed]" />}
    </div>
  );
}

function Taskbar() {
  return (
    <div className={"flex h-[50px] items-center bg-gradient-to-r from-[#263840] via-[#2b3032] to-[#1d2c35] text-white " + ui}>
      <svg viewBox="0 0 20 20" className="ml-[20px] size-5">
        <path d="M0 2.800 8.700 1.600V9.500H0zM9.700 1.400 20 0v9.500H9.700zM0 10.500h8.700v7.900L0 17.200zM9.700 10.500H20V20L9.700 18.600z" fill="#fff" />
      </svg>
      <div className="ml-[20px] flex h-[50px] w-[430px] items-center border-2 border-r-0 border-[#b8b8b8] bg-[#f2f2f2]">
        <svg viewBox="0 0 20 20" className="ml-[13px] size-5">
          <circle cx="12" cy="7.500" r="6.300" fill="none" stroke="#222" strokeWidth="1.500" />
          <path d="M7.500 12 1 19" stroke="#222" strokeWidth="1.600" />
        </svg>
        <span className="ml-[15px] whitespace-nowrap text-[18.8px] tracking-[-0.5px] text-[#333]">Type here to search</span>
      </div>
      <div className="ml-[20px] size-[20px] rounded-full border-[3px] border-white" />
      <svg viewBox="0 0 20 20" className="ml-[40px] size-5">
        <path d="M.8 0v3.500h12V0M.8 20v-3.500h12V20M.8 6h12v8h-12zM18 0v5M18 10v10" fill="none" stroke="#fff" strokeWidth="1.300" />
        <rect x="16.500" y="6" width="3.200" height="3.200" fill="#fff" />
      </svg>
      <TaskItem line={false} className="ml-[28px]"><Chrome /></TaskItem>
      <TaskItem className="ml-[11px]">
        <svg viewBox="0 0 26 28" className="h-7 w-[26px]">
          <path d="M1 12C2 5 7 1 13.500 1 21 1 25 6 25 12.500v3H9c0 4 3.500 6.500 8 6.500 2.800 0 5-.7 7-1.800v5.300c-2 1.200-4.800 2-8 2C8 27.500 3.500 23 3.500 17 3.500 12 6.500 9 11 7.300 6.500 7.500 3 9 1 12zM9.300 11h8.900c0-3-1.500-4.800-4.200-4.800S9.800 8.200 9.300 11z" fill="#0078d7" />
        </svg>
      </TaskItem>
      <TaskItem className="ml-[11px]">
        <svg viewBox="0 0 26 28" className="h-7 w-[26px]">
          <path d="M2 1h15v24H6L2 23z" fill="#f5d576" />
          <path d="M2 1l5 3v23l-5-3z" fill="#fdeaa5" />
          <rect x="11" y="8" width="14" height="18" fill="#26303a" />
          <rect x="13.500" y="9" width="9" height="7" fill="#3467c4" />
          <rect x="13.500" y="17" width="9" height="7.500" fill="#2558ae" />
          <path d="M14 13h4v2h-4z" fill="#d8452c" />
          <path d="M18 11h4v3h-4z" fill="#e3b62b" />
          <path d="M12 9v16M24 9v16" stroke="#cfd6dc" strokeDasharray="1.500 1.500" strokeWidth="1.200" />
        </svg>
      </TaskItem>
      <TaskItem className="ml-[11px]">
        <svg viewBox="0 0 26 28" className="h-7 w-[26px]">
          <path d="M3 19.500h20l3 8H0z" fill="#f9950f" />
          <path d="M12 .5h2L19.500 22q-6.500 3-13 0z" fill="#f27a0c" />
          <path d="M10.700 6h4.600l1.300 5q-3.600 1.500-7.200 0zM8.200 15.500q4.800 2 9.600 0l1.200 4.500q-6 2.500-12 0z" fill="#efefef" />
        </svg>
      </TaskItem>
      <TaskItem active className="ml-[6px]"><Chrome /></TaskItem>
      <TaskItem className="ml-[6px]"><Chrome badge /></TaskItem>
      <TaskItem className="ml-[11px]">
        <svg viewBox="0 0 28 28" className="size-7">
          <path d="M9 1.500 26 3l-1 23-4 1z" fill="#c9b98e" />
          <path d="M9 1.500 24 3 20 26.500 1 22z" fill="#8ed3dc" />
          <path d="M9 1.500 24 3 22 14 5 11z" fill="#d8f1f4" />
          <path d="M2 20l18 4-.4 2.500L1 22z" fill="#3f94a2" />
          <path d="M9 2h15" stroke="#777" strokeWidth="1.500" strokeDasharray="1 1" />
        </svg>
      </TaskItem>
      <TaskItem className="ml-[11px]">
        <svg viewBox="0 0 30 30" className="size-[30px]">
          <path d="M2 17C1 9 9 4 17 5.500c8 1.500 10 8 7 13.500-3 6-9 9-13 8.500-3-.5 0-4-2-5.500s-6-1-7-5z" fill="#cfe6f5" />
          <circle cx="7" cy="16" r="2.400" fill="#e2483b" />
          <circle cx="11" cy="11" r="2.400" fill="#e8b52c" />
          <circle cx="17" cy="9.500" r="2.400" fill="#4cae4c" />
          <circle cx="11" cy="22" r="1.700" fill="#2a5aa8" />
          <path d="M15 27 24 5" stroke="#e48a2b" strokeWidth="2.600" />
          <path d="M22 6 23.500 0l5 4L25.500 8z" fill="#c49a6a" />
        </svg>
      </TaskItem>
      <svg viewBox="0 0 16 10" className="ml-auto h-[10px] w-4"><path d="M1 9l7-7.500L15 9" fill="none" stroke="#fff" strokeWidth="1.500" /></svg>
      <svg viewBox="0 0 20 16" className="ml-[13px] h-4 w-5">
        <path d="M6 4h12v9H4V8M18 6.500h1.500v4H18" fill="none" stroke="#fff" strokeWidth="1.400" />
        <path d="M1.500 0v3M4.500 0v3M0 3h6v2.500L4 7H2L0 5.500zM3 7v6h3" fill="none" stroke="#fff" strokeWidth="1.200" />
        <rect x="5" y="6" width="2.500" height="5" fill="#fff" />
      </svg>
      <svg viewBox="0 0 17 16" className="ml-[13px] h-4 w-[17px]">
        <path d="M1 15A15 15 0 0 1 16 1.500M5 15A11 11 0 0 1 16 5.200M9 15A7 7 0 0 1 16 9" fill="none" stroke="#ddd" strokeWidth="1.400" />
        <circle cx="14" cy="13.800" r="1.700" fill="#fff" />
      </svg>
      <svg viewBox="0 0 21 18" className="ml-[10px] h-[18px] w-[21px]">
        <path d="M1 6h3l4-4v14l-4-4H1z" fill="none" stroke="#fff" strokeWidth="1.300" />
        <path d="M11 6.500q1.500 2.500 0 5M14 4q3 5 0 10M17 1.500q5 7.500 0 15" fill="none" stroke="#fff" strokeWidth="1.200" />
      </svg>
      <div className="ml-[9px] w-[76px] text-center text-[15.2px] leading-[23px] tracking-[-0.45px] whitespace-nowrap">
        10:01 PM<br />28-May-22
      </div>
      <svg viewBox="0 0 32 32" className="ml-[17px] h-8 w-8">
        <path d="M1 3h20v15h-10l-4 4v-4H1z" fill="#fff" />
        <path d="M4 7.500h14M4 11h14M4 14.500h9" stroke="#26323a" strokeWidth="1.300" />
        <circle cx="20" cy="22" r="9.600" fill="#2b343a" stroke="#999" strokeWidth="1.200" />
        <text x="20" y="27" textAnchor="middle" fill="#fff" className="text-[13.5px]">1</text>
      </svg>
      <span className="ml-[14px] mr-[5px] h-[50px] w-px bg-[#6f7a80]" />
    </div>
  );
}

export default function App() {
  return (
    <div className="flex h-[1080px] w-[1920px] flex-col overflow-hidden bg-white">
      <TabStrip />
      <AddressBar />
      <Header />
      <div className="flex h-[822px]">
        <DiagramPane />
        <div className="flex w-[11px] bg-[#3f3f3f] pl-px pt-[3px]">
          <div className="w-2 bg-[#486a91]" />
        </div>
        <WavePane />
      </div>
      <DownloadBar />
      <Taskbar />
    </div>
  );
}
